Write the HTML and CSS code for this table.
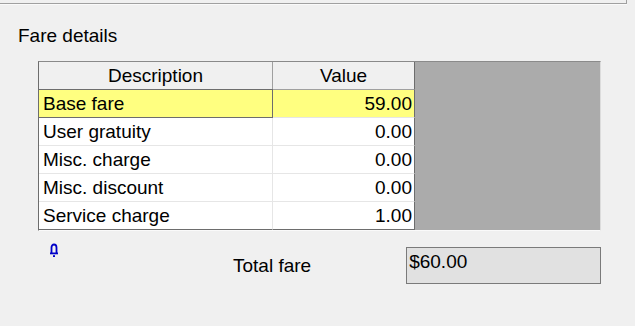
FILE: index.html
```html
<!DOCTYPE html>
<html>
<head>
<meta charset="utf-8">
<link rel="stylesheet" href="styles.css">
</head>
<body>
<div class="frame"></div>
<div class="title">Fare details</div>
<div class="grid">
  <div class="hcell">Description</div>
  <div class="hcell hval">Value</div>
  <div class="empty"></div>
  <div class="cell desc sel focus">Base fare</div>
  <div class="cell val sel">59.00</div>
  <div class="cell desc">User gratuity</div>
  <div class="cell val">0.00</div>
  <div class="cell desc">Misc. charge</div>
  <div class="cell val">0.00</div>
  <div class="cell desc">Misc. discount</div>
  <div class="cell val">0.00</div>
  <div class="cell desc last">Service charge</div>
  <div class="cell val last">1.00</div>
</div>
<div class="bottom">
  <svg class="bell" width="10" height="14" viewBox="0 0 10 14">
    <path d="M2.5 10 V4.5 A2.5 3 0 0 1 7.5 4.5 V10" fill="none" stroke="#0000c8" stroke-width="1.8"/>
    <rect x="1" y="9.5" width="8" height="1.8" fill="#0000c8"/>
    <rect x="4" y="12.2" width="2" height="1.8" fill="#0000c8"/>
  </svg>
  <div class="label">Total fare</div>
  <div class="total">$60.00</div>
</div>
</body>
</html>
```
FILE: styles.css
```css
html, body {
  margin: 0;
  padding: 0;
  background: #f0f0f0;
  font-family: "Liberation Sans", Arial, sans-serif;
  font-size: 19px;
  color: #000;
}
.frame {
  width: 626px;
  height: 3px;
  border-bottom: 1px solid #a0a0a0;
  border-right: 1px solid #a0a0a0;
  box-shadow: 0 1px 0 #fafafa;
}
.title {
  margin: 21px 0 0 18px;
  line-height: 22px;
}
.grid {
  margin: 14px 0 0 38px;
  width: 561px;
  display: grid;
  grid-template-columns: 234px 142px 185px;
  grid-template-rows: repeat(6, 28px);
  border-left: 1px solid #6d6d6d;
  border-top: 1px solid #8a8a8a;
  border-right: 1px solid #dcdcdc;
  border-bottom: 1px solid #fafafa;
}
.hcell {
  box-sizing: border-box;
  background: #f0f0f0;
  border-right: 1px solid #a0a0a0;
  border-bottom: 1px solid #a0a0a0;
  text-align: center;
  line-height: 27px;
}
.hval {
  border-right-color: #6d6d6d;
}
.empty {
  grid-column: 3;
  grid-row: 1 / 7;
  background: #ababab;
}
.cell {
  box-sizing: border-box;
  background: #fff;
  border-bottom: 1px solid #e6e6e6;
  border-right: 1px solid #e6e6e6;
  line-height: 27px;
  white-space: nowrap;
}
.desc {
  padding-left: 4px;
}
.val {
  text-align: right;
  padding-right: 2px;
  border-right-color: #6d6d6d;
}
.sel {
  background: #ffff80;
}
.focus {
  border-right-color: #6d6d6d;
  border-bottom-color: #6d6d6d;
  box-shadow: 0 -1px 0 #6d6d6d;
}
.last {
  border-bottom-color: #6d6d6d;
}
.bottom {
  display: flex;
  align-items: flex-start;
  padding-left: 49px;
}
.bell {
  display: block;
  flex: 0 0 10px;
  width: 10px;
  height: 14px;
  margin-top: 12px;
}
.label {
  margin-left: 174px;
  margin-top: 24px;
  line-height: 22px;
}
.total {
  box-sizing: border-box;
  margin-left: 95px;
  margin-top: 16px;
  width: 195px;
  height: 37px;
  border: 1px solid #7a7a7a;
  background: #e1e1e1;
  padding: 3px 2px 0;
  line-height: 22px;
}
```
